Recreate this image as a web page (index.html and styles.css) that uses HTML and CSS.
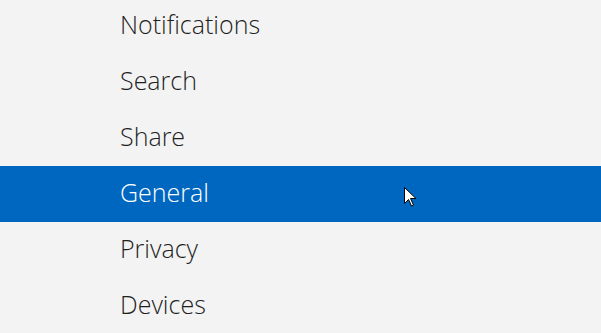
FILE: index.html
```html
<!DOCTYPE html>
<html>
<head>
<meta charset="utf-8">
<link rel="stylesheet" href="styles.css">
</head>
<body>
<ul class="menu">
  <li class="item">Notifications</li>
  <li class="item">Search</li>
  <li class="item">Share</li>
  <li class="item selected">General
    <svg class="cursor" width="13" height="20" viewBox="0 0 13 20">
      <path d="M0.5 0.5 L0.5 16.5 L4.5 12.5 L7.5 19 L9.5 18 L6.5 11.5 L12 11.5 Z" fill="#fff" stroke="#000" stroke-width="1" stroke-linejoin="miter"/>
    </svg>
  </li>
  <li class="item">Privacy</li>
  <li class="item">Devices</li>
</ul>
</body>
</html>
```
FILE: styles.css
```css
html, body {
  margin: 0;
  padding: 0;
  background: #f3f3f3;
  width: 601px;
  height: 333px;
  overflow: hidden;
}
.menu {
  list-style: none;
  margin: -2px 0 0 0;
  padding: 0;
}
.item {
  position: relative;
  height: 56px;
  line-height: 52px;
  padding-left: 120px;
  font-family: "Open Sans", sans-serif;
  font-weight: 300;
  font-size: 25px;
  color: #1f1f1f;
}
.selected {
  background: #0067c0;
  color: #fff;
}
.cursor {
  position: absolute;
  left: 404px;
  top: 21px;
}
```
